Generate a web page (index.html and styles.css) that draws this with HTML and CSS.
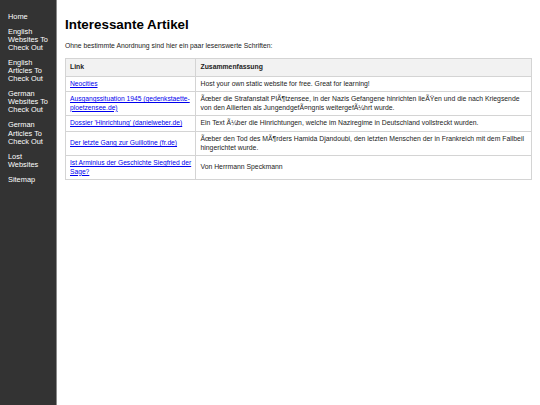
FILE: index.html
```html
<!DOCTYPE html>
<html lang="de">
<head>
<meta charset="utf-8">
<title>Interessante Artikel</title>
<link rel="stylesheet" href="styles.css">
</head>
<body>
<nav class="sidebar">
  <a class="nav-link" href="#">Home</a>
  <a class="nav-link" href="#">English Websites To Check Out</a>
  <a class="nav-link" href="#">English Articles To Check Out</a>
  <a class="nav-link" href="#">German Websites To Check Out</a>
  <a class="nav-link" href="#">German Articles To Check Out</a>
  <a class="nav-link" href="#">Lost Websites</a>
  <a class="nav-link" href="#">Sitemap</a>
</nav>
<main class="content">
  <h1 class="title">Interessante Artikel</h1>
  <p class="intro">Ohne bestimmte Anordnung sind hier ein paar lesenswerte Schriften:</p>
  <table class="articles">
    <thead>
      <tr><th class="col-link">Link</th><th>Zusammenfassung</th></tr>
    </thead>
    <tbody>
      <tr><td><a href="#">Neocities</a></td><td>Host your own static website for free. Great for learning!</td></tr>
      <tr><td><a href="#">Ausgangssituation 1945 (gedenkstaette-ploetzensee.de)</a></td><td>Ãœber die Strafanstalt PlÃ¶tzensee, in der Nazis Gefangene hinrichten lieÃŸen und die nach Kriegsende von den Allierten als JungendgefÃ¤ngnis weitergefÃ¼hrt wurde.</td></tr>
      <tr><td><a href="#">Dossier 'Hinrichtung' (danielweber.de)</a></td><td>Ein Text Ã¼ber die Hinrichtungen, welche im Naziregime in Deutschland vollstreckt wurden.</td></tr>
      <tr><td><a href="#">Der letzte Gang zur Guillotine (fr.de)</a></td><td>Ãœber den Tod des MÃ¶rders Hamida Djandoubi, den letzten Menschen der in Frankreich mit dem Fallbeil hingerichtet wurde.</td></tr>
      <tr><td><a href="#">Ist Arminius der Geschichte Siegfried der Sage?</a></td><td>Von Herrmann Speckmann</td></tr>
    </tbody>
  </table>
</main>
</body>
</html>
```
FILE: styles.css
```css
html, body {
  margin: 0;
  padding: 0;
  background: #ffffff;
  font-family: "Liberation Sans", Arial, sans-serif;
  color: #222;
}
body {
  min-height: 405px;
}
.sidebar {
  position: fixed;
  top: 0;
  left: 0;
  bottom: 0;
  width: 57px;
  background: #333333;
  border-right: 1px solid #8a8a8a;
  display: flex;
  flex-direction: column;
  gap: 7px;
  padding: 12.5px 4px 0 8px;
  box-sizing: border-box;
}
.nav-link,
.nav-link:visited {
  color: #ffffff;
  text-decoration: none;
  font-size: 7.4px;
  line-height: 8.1px;
}
.content {
  margin-left: 57px;
  padding: 8px 8px;
}
.title {
  font-size: 13.4px;
  font-weight: bold;
  margin: 9px 0 0;
  line-height: 16px;
  color: #000;
}
.intro {
  font-size: 6.8px;
  margin: 9px 0 0;
  line-height: 8px;
}
.articles {
  margin-top: 8px;
  width: 100%;
  border-collapse: collapse;
  font-size: 6.85px;
  line-height: 8.6px;
}
.articles th, .articles td {
  border: 1px solid #d4d4d4;
  padding: 3px 4px;
  text-align: left;
  vertical-align: middle;
}
.articles th {
  background: #f2f2f2;
  font-weight: bold;
  padding: 4px 4px;
}
.col-link {
  width: 28%;
}
.articles a,
.articles a:visited {
  color: #0000ee;
  font-size: 6.7px;
}
```
